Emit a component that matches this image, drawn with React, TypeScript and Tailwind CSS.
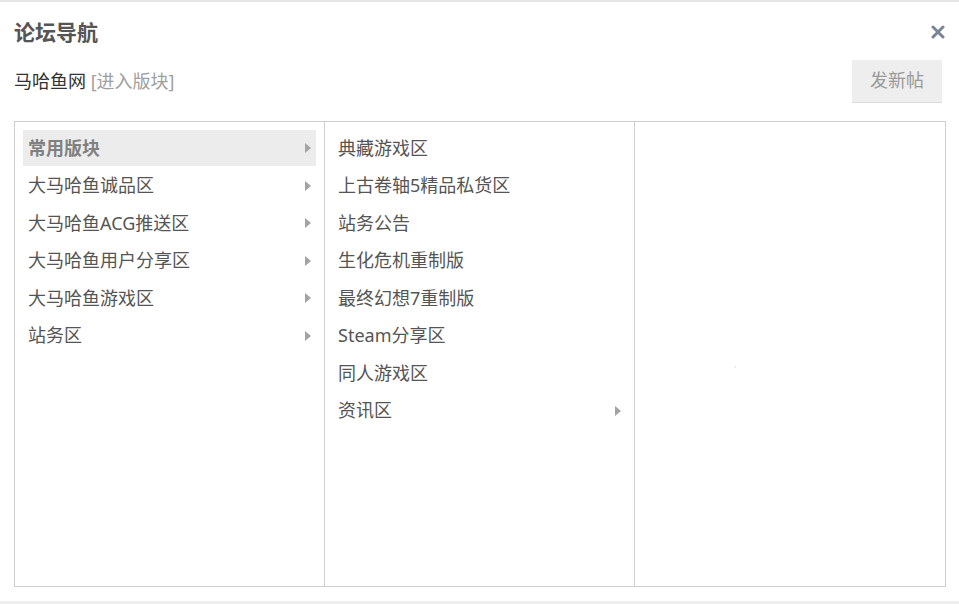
const primary = [
  { name: "常用版块", sub: true },
  { name: "大马哈鱼诚品区", sub: true },
  { name: "大马哈鱼ACG推送区", sub: true },
  { name: "大马哈鱼用户分享区", sub: true },
  { name: "大马哈鱼游戏区", sub: true },
  { name: "站务区", sub: true },
];

const secondary = [
  { name: "典藏游戏区", sub: false },
  { name: "上古卷轴5精品私货区", sub: false },
  { name: "站务公告", sub: false },
  { name: "生化危机重制版", sub: false },
  { name: "最终幻想7重制版", sub: false },
  { name: "Steam分享区", sub: false },
  { name: "同人游戏区", sub: false },
  { name: "资讯区", sub: true },
];

function Arrow() {
  return (
    <svg width="6" height="10" viewBox="0 0 6 10" className="shrink-0">
      <path d="M0 0 L6 5 L0 10 Z" fill="#a3a3a3" />
    </svg>
  );
}

function Column({
  items,
  active,
}: {
  items: { name: string; sub: boolean }[];
  active?: number;
}) {
  return (
    <div className="flex w-[310px] shrink-0 flex-col gap-[1.5px] border-r border-[#cfcfcf] px-2 pt-2">
      {items.map((item, i) => (
        <div
          key={item.name}
          className={
            "flex h-9 items-center justify-between pl-[5px] pr-[5px] text-[18px] " +
            (i === active
              ? "bg-[#ececec] font-bold text-[#808080]"
              : "text-[#555555]")
          }
        >
          <span>{item.name}</span>
          {item.sub ? <Arrow /> : null}
        </div>
      ))}
    </div>
  );
}

export default function App() {
  return (
    <div
      className="flex h-[604px] w-[959px] flex-col bg-white"
      style={{ fontFamily: '"Noto Sans", "Noto Sans CJK SC", sans-serif' }}
    >
      <div className="h-[2px] bg-[#e6e6e6]" />
      <div className="flex flex-1 flex-col px-[14px]">
        <div className="flex h-[58px] items-center justify-between pt-[2px]">
          <h1 className="text-[21px] font-bold leading-none text-[#555555]">
            论坛导航
          </h1>
          <svg width="14" height="14" viewBox="0 0 14 14">
            <path
              d="M2 2 L12 12 M12 2 L2 12"
              stroke="#7b8494"
              strokeWidth="3"
              strokeLinecap="round"
            />
          </svg>
        </div>
        <div className="flex items-center justify-between">
          <p className="text-[18px] text-[#333333]">
            马哈鱼网 <span className="text-[#a0a0a0]">[进入版块]</span>
          </p>
          <button className="mr-[3px] h-[43px] w-[90px] border-b border-[#dcdcdc] bg-[#eeeeee] pb-[2px] text-[18px] text-[#9a9a9a]">
            发新帖
          </button>
        </div>
        <div className="mt-[18px] flex h-[466px] w-[932px] border border-[#cfcfcf]">
          <Column items={primary} active={0} />
          <Column items={secondary} />
          <div className="relative flex-1">
            <span className="absolute left-[99px] top-[244px] h-[2px] w-[2px] bg-[#eeeeee]" />
          </div>
        </div>
      </div>
      <div className="h-[3px] bg-[#eeeeee]" />
    </div>
  );
}
